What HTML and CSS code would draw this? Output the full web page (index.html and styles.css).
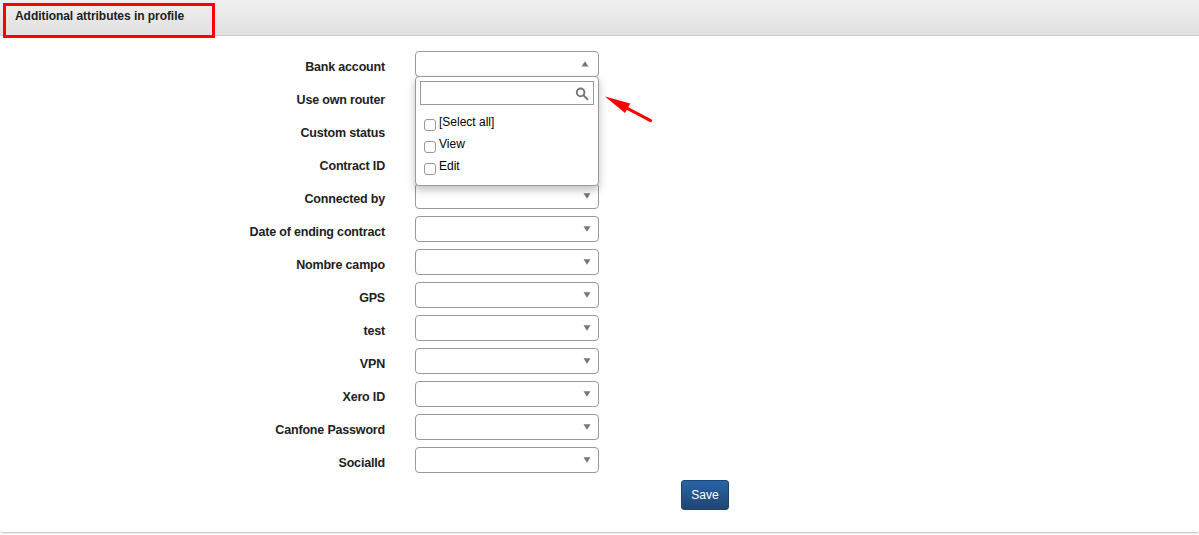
FILE: index.html
```html
<!DOCTYPE html>
<html lang="en">
<head>
<meta charset="utf-8">
<title>Additional attributes in profile</title>
<link rel="stylesheet" href="styles.css">
</head>
<body>
<section class="panel">
  <header class="panel-header"><h1 class="title">Additional attributes in profile</h1></header>
  <form class="form">
    <div class="row"><span class="label">Bank account</span>
      <div class="select open"><svg class="caret" viewBox="0 0 8 6"><path d="M0.5 5.5L4 0.2L7.5 5.5Z"/></svg>
        <div class="menu">
          <div class="search"><svg class="lens" viewBox="0 0 14 14"><circle cx="5.6" cy="5.4" r="3.8"/><path d="M8.6 8.4L12.4 12.2"/></svg></div>
          <label class="option"><input class="check" type="checkbox"><span class="option-text">[Select all]</span></label>
          <label class="option"><input class="check" type="checkbox"><span class="option-text">View</span></label>
          <label class="option"><input class="check" type="checkbox"><span class="option-text">Edit</span></label>
        </div>
      </div></div>
    <div class="row"><span class="label">Use own router</span><div class="select"><svg class="caret" viewBox="0 0 8 6"><path d="M0.5 0.3H7.5L4 5.8Z"/></svg></div></div>
    <div class="row"><span class="label">Custom status</span><div class="select"><svg class="caret" viewBox="0 0 8 6"><path d="M0.5 0.3H7.5L4 5.8Z"/></svg></div></div>
    <div class="row"><span class="label">Contract ID</span><div class="select"><svg class="caret" viewBox="0 0 8 6"><path d="M0.5 0.3H7.5L4 5.8Z"/></svg></div></div>
    <div class="row"><span class="label">Connected by</span><div class="select"><svg class="caret" viewBox="0 0 8 6"><path d="M0.5 0.3H7.5L4 5.8Z"/></svg></div></div>
    <div class="row"><span class="label">Date of ending contract</span><div class="select"><svg class="caret" viewBox="0 0 8 6"><path d="M0.5 0.3H7.5L4 5.8Z"/></svg></div></div>
    <div class="row"><span class="label">Nombre campo</span><div class="select"><svg class="caret" viewBox="0 0 8 6"><path d="M0.5 0.3H7.5L4 5.8Z"/></svg></div></div>
    <div class="row"><span class="label">GPS</span><div class="select"><svg class="caret" viewBox="0 0 8 6"><path d="M0.5 0.3H7.5L4 5.8Z"/></svg></div></div>
    <div class="row"><span class="label">test</span><div class="select"><svg class="caret" viewBox="0 0 8 6"><path d="M0.5 0.3H7.5L4 5.8Z"/></svg></div></div>
    <div class="row"><span class="label">VPN</span><div class="select"><svg class="caret" viewBox="0 0 8 6"><path d="M0.5 0.3H7.5L4 5.8Z"/></svg></div></div>
    <div class="row"><span class="label">Xero ID</span><div class="select"><svg class="caret" viewBox="0 0 8 6"><path d="M0.5 0.3H7.5L4 5.8Z"/></svg></div></div>
    <div class="row"><span class="label">Canfone Password</span><div class="select"><svg class="caret" viewBox="0 0 8 6"><path d="M0.5 0.3H7.5L4 5.8Z"/></svg></div></div>
    <div class="row"><span class="label">SocialId</span><div class="select"><svg class="caret" viewBox="0 0 8 6"><path d="M0.5 0.3H7.5L4 5.8Z"/></svg></div></div>
    <button class="save" type="button">Save</button>
  </form>
</section>
<div class="highlight"></div>
<svg class="arrow" viewBox="0 0 50 30"><path class="arrow-head" d="M0 0.5L25.3 7.6L20 17Z"/><path class="arrow-shaft" d="M20 11.2L45.6 24.6"/></svg>
</body>
</html>
```
FILE: styles.css
```css
* { box-sizing: border-box; }
body {
  position: relative;
  margin: 0;
  height: 535px;
  overflow: hidden;
  background: #fbfbfb;
  font-family: "Liberation Sans", Arial, sans-serif;
  font-size: 12px;
}
.panel {
  height: 533px;
  background: #fff;
  border-bottom: 1px solid #ccc;
  border-radius: 0 0 3px 3px;
  box-shadow: 0 1px 1px #eee;
}
.panel-header {
  height: 36px;
  padding: 8px 15px;
  background: linear-gradient(#f0f0f0, #e0e0e0);
  border-bottom: 1px solid #ccc;
}
.title {
  margin: 0;
  font-size: 12px;
  line-height: 16px;
  letter-spacing: -0.05px;
  color: #222;
}
.form { padding-top: 15px; }
.row {
  display: flex;
  gap: 30px;
  height: 33px;
}
.label {
  width: 385px;
  padding-top: 6px;
  text-align: right;
  font-size: 12.5px;
  line-height: 20px;
  letter-spacing: -0.18px;
  font-weight: bold;
  color: #222;
}
.select {
  display: flex;
  align-items: center;
  justify-content: flex-end;
  width: 184px;
  height: 26px;
  padding-right: 7px;
  background: #fff;
  border: 1px solid #999;
  border-radius: 4px;
}
.open {
  position: relative;
  padding-right: 9px;
}
.caret { width: 8px; height: 6px; fill: #777; }
.menu {
  position: absolute;
  z-index: 2;
  left: -1px;
  top: 24px;
  width: 184px;
  height: 110px;
  padding: 4px;
  background: #fff;
  border: 1px solid #999;
  border-radius: 4px;
  box-shadow: 0 4px 8px rgba(0, 0, 0, .25);
}
.search {
  display: flex;
  align-items: center;
  justify-content: flex-end;
  height: 24px;
  margin-bottom: 6px;
  padding-right: 4px;
  border: 1px solid #999;
}
.lens {
  width: 14px;
  height: 14px;
  margin-top: 2px;
  fill: none;
  stroke: #777;
  stroke-width: 2;
  stroke-linecap: round;
}
.option {
  display: flex;
  gap: 3px;
  height: 22px;
  padding-left: 4px;
}
.check {
  appearance: none;
  width: 12px;
  height: 12px;
  margin: 8px 0 0;
  background: #fff;
  border: 1px solid #999;
  border-radius: 3px;
}
.option-text { line-height: 22px; color: #000; }
.save {
  display: block;
  width: 48px;
  height: 30px;
  margin-left: 681px;
  padding: 0;
  border: 1px solid #1c4470;
  border-radius: 3px;
  background: linear-gradient(#2864a6, #20456f);
  color: #fff;
  font: 12px "Liberation Sans", Arial, sans-serif;
}
.highlight {
  position: absolute;
  left: 3px;
  top: 3px;
  width: 212px;
  height: 35px;
  border: 3px solid #f00;
}
.arrow {
  position: absolute;
  left: 605px;
  top: 96px;
  width: 50px;
  height: 30px;
}
.arrow-head { fill: #f00; }
.arrow-shaft { stroke: #f00; stroke-width: 3; stroke-linecap: round; }
```
